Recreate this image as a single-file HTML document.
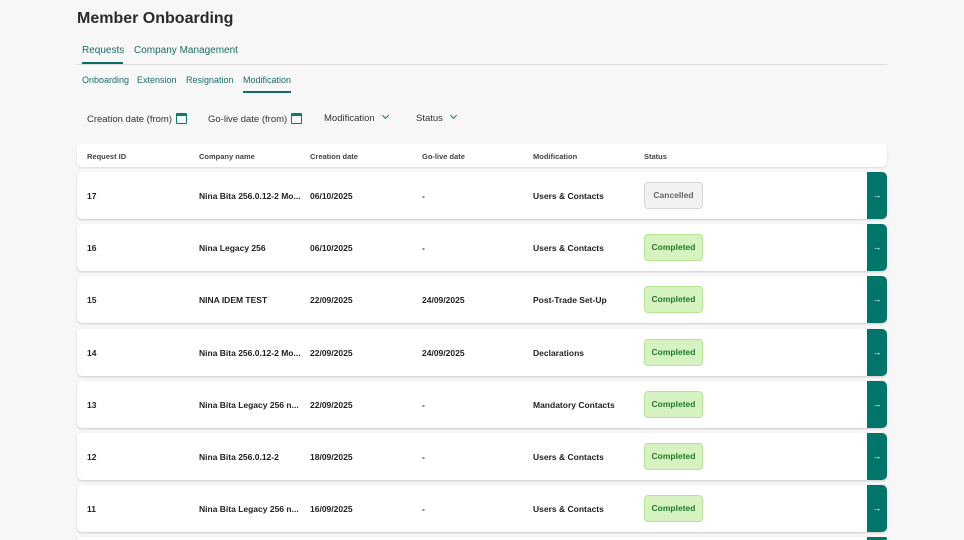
<!DOCTYPE html>
<html style="width:964px;height:540px;overflow:hidden"><head><style>
*{margin:0;padding:0;box-sizing:border-box}
body{width:964px;height:540px;overflow:hidden;background:#f7f7f7;font-family:"Liberation Sans",sans-serif;color:#222;position:relative}
h1{position:absolute;left:77px;top:10px;font-size:16px;font-weight:bold;color:#2a2a2a}
.tab{position:absolute;font-size:10px;color:#1a6e66}
.sep{position:absolute;left:77px;top:64px;width:810px;height:1px;background:#dcdcdc}
.ul{position:absolute;height:2px;background:#0d6e64}
.f{position:absolute;top:113px;font-size:9.5px;color:#333}
.cal{display:inline-block;width:11px;height:11px;border:1.5px solid #0d7a6f;border-top-width:3px;border-radius:1px;vertical-align:-2px;margin-left:4px}
.chev{display:inline-block;width:5px;height:5px;border-right:1.5px solid #0d7a6f;border-bottom:1.5px solid #0d7a6f;transform:rotate(45deg);margin-left:8px;vertical-align:3px}
.hdr{position:absolute;left:77px;top:144px;width:810px;height:23px;background:#fff;border-radius:5px;box-shadow:0 1px 2px rgba(0,0,0,.12)}
.hdr span{position:absolute;top:8px;font-size:7.5px;font-weight:bold;color:#444}
.row{position:absolute;left:77px;width:810px;height:47px;background:#fff;border-radius:5px;box-shadow:0 1px 2px rgba(0,0,0,.18)}
.row span{position:absolute;top:19px;font-size:8.5px;font-weight:bold;color:#222;white-space:nowrap}
.btn{position:absolute;right:0;top:0;width:20px;height:47px;background:#00766a;border-radius:0 5px 5px 0;color:#fff;font-size:9px;text-align:center;line-height:47px}
.badge{position:absolute;left:567px;top:10px;width:59px;height:27px;border-radius:4px;font-size:8.5px;font-weight:bold;text-align:center;line-height:25px}
.comp{background:#d6f2c0;border:1px solid #b5e495;color:#1f7a2a}
.canc{background:#f2f2f2;border:1px solid #d6d6d6;color:#666}
</style></head><body>
<h1>Member Onboarding</h1>
<div class="tab" style="left:82px;top:45px">Requests</div>
<div class="tab" style="left:134px;top:45px">Company Management</div>
<div class="sep"></div>
<div class="ul" style="left:82px;top:62px;width:41px"></div>
<div class="tab" style="left:82px;top:75px;font-size:9px">Onboarding</div>
<div class="tab" style="left:137px;top:75px;font-size:9px">Extension</div>
<div class="tab" style="left:186px;top:75px;font-size:9px">Resignation</div>
<div class="tab" style="left:243px;top:75px;font-size:9px">Modification</div>
<div class="ul" style="left:243px;top:91px;width:48px"></div>
<div class="f" style="left:87px">Creation date (from)<span class="cal"></span></div>
<div class="f" style="left:208px">Go-live date (from)<span class="cal"></span></div>
<div class="f" style="left:324px">Modification<span class="chev"></span></div>
<div class="f" style="left:416px">Status<span class="chev"></span></div>
<div class="hdr"><span style="left:10px">Request ID</span><span style="left:122px">Company name</span><span style="left:233px">Creation date</span><span style="left:345px">Go-live date</span><span style="left:456px">Modification</span><span style="left:567px">Status</span></div>

<div class="row" style="top:172px"><span style="left:10px">17</span><span style="left:122px">Nina Bita 256.0.12-2 Mo...</span><span style="left:233px">06/10/2025</span><span style="left:345px">-</span><span style="left:456px">Users &amp; Contacts</span><div class="badge canc">Cancelled</div><div class="btn">→</div></div>
<div class="row" style="top:224px"><span style="left:10px">16</span><span style="left:122px">Nina Legacy 256</span><span style="left:233px">06/10/2025</span><span style="left:345px">-</span><span style="left:456px">Users &amp; Contacts</span><div class="badge comp">Completed</div><div class="btn">→</div></div>
<div class="row" style="top:276px"><span style="left:10px">15</span><span style="left:122px">NINA IDEM TEST</span><span style="left:233px">22/09/2025</span><span style="left:345px">24/09/2025</span><span style="left:456px">Post-Trade Set-Up</span><div class="badge comp">Completed</div><div class="btn">→</div></div>
<div class="row" style="top:329px"><span style="left:10px">14</span><span style="left:122px">Nina Bita 256.0.12-2 Mo...</span><span style="left:233px">22/09/2025</span><span style="left:345px">24/09/2025</span><span style="left:456px">Declarations</span><div class="badge comp">Completed</div><div class="btn">→</div></div>
<div class="row" style="top:381px"><span style="left:10px">13</span><span style="left:122px">Nina Bita Legacy 256 n...</span><span style="left:233px">22/09/2025</span><span style="left:345px">-</span><span style="left:456px">Mandatory Contacts</span><div class="badge comp">Completed</div><div class="btn">→</div></div>
<div class="row" style="top:433px"><span style="left:10px">12</span><span style="left:122px">Nina Bita 256.0.12-2</span><span style="left:233px">18/09/2025</span><span style="left:345px">-</span><span style="left:456px">Users &amp; Contacts</span><div class="badge comp">Completed</div><div class="btn">→</div></div>
<div class="row" style="top:485px"><span style="left:10px">11</span><span style="left:122px">Nina Bita Legacy 256 n...</span><span style="left:233px">16/09/2025</span><span style="left:345px">-</span><span style="left:456px">Users &amp; Contacts</span><div class="badge comp">Completed</div><div class="btn">→</div></div>
<div class="row" style="top:537px;height:3px"><div class="btn" style="height:3px"></div></div>
</body></html>
